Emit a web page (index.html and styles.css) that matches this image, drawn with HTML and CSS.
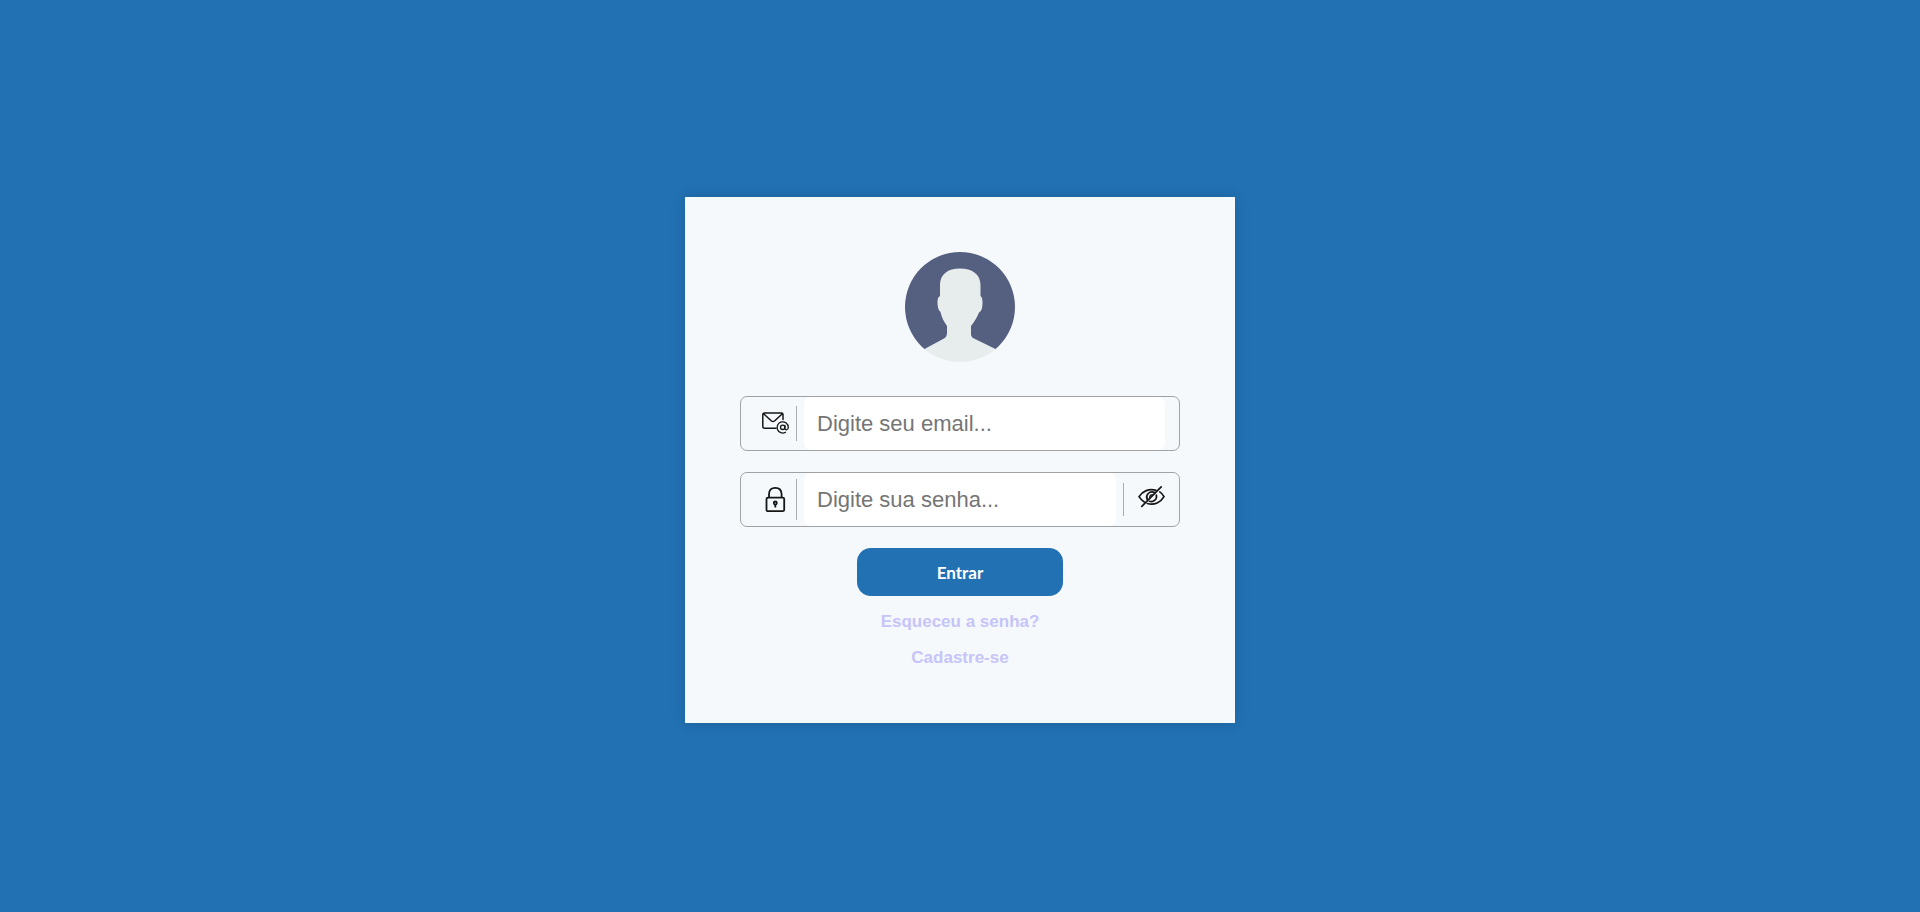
FILE: index.html
```html
<!DOCTYPE html>
<html lang="pt-BR">
<head>
<meta charset="utf-8">
<meta name="viewport" content="width=device-width, initial-scale=1">
<title>Login</title>
<link rel="stylesheet" href="styles.css">
</head>
<body class="page">
<main class="card">
  <svg class="avatar" viewBox="0 0 110 110" role="img" aria-label="Usuário">
    <defs><clipPath id="disc"><circle cx="55" cy="55" r="55"/></clipPath></defs>
    <g clip-path="url(#disc)">
      <rect width="110" height="97" fill="#556080"/>
      <path fill="#e7eced" d="M35 33C35 22 43 16.500 55 16.500S75.500 22 75.500 33V44C77 45 77.500 47 77.500 50C77.500 55 77 59 74 60.500C72 66 69 70 66 74V82Q66 85 69 86.500L90.500 97V110H19.500V97L39 86.500Q42 84.500 42 81V74C39 70 36.500 65 35.500 60C33 58 32.500 54 32.500 50C32.500 47 33 45 35 44Z"/>
    </g>
  </svg>
  <form class="form">
    <div class="field">
      <label class="lead" for="email" aria-label="Email">
        <svg class="icon" viewBox="0 1 27 27" fill="none" stroke="#161616" stroke-width="1.500" stroke-linecap="round" stroke-linejoin="round">
          <path d="M14 19.300H2.500Q.8 19.300.8 17.500V5.500Q.8 4 2.500 4H19.500Q21 4 21 5.500V10.500M1.300 4.500L9.500 12Q11 13.200 12.500 12L20.600 4.500"/>
          <path d="M23.500 23.300A5.600 5.600 0 1 1 26.300 18.300C26.300 21.500 22.900 21.600 22.900 19.300V16.300" stroke-width="1.300"/>
          <circle cx="20.700" cy="18.300" r="2.200" stroke-width="1.300"/>
        </svg>
      </label>
      <input class="input" id="email" type="email" placeholder="Digite seu email...">
    </div>
    <div class="field">
      <label class="lead lead-tall" for="password" aria-label="Senha">
        <svg class="icon" viewBox="0 0 27 27" fill="none" stroke="#161616" stroke-width="1.800" stroke-linejoin="round">
          <rect x="4.500" y="11.600" width="17.700" height="13.600" rx="1.500"/>
          <path d="M7 11.500V8.300C7 4 9.400 1.800 13.300 1.800S19.600 4 19.600 8.300V11.500"/>
          <circle cx="13.300" cy="17" r="1.500"/>
          <path d="M13.300 18.500V21.500"/>
        </svg>
      </label>
      <input class="input" id="password" type="password" placeholder="Digite sua senha...">
      <button class="reveal" type="button" aria-label="Mostrar senha">
        <svg class="icon" viewBox="0 0 27 27" fill="none" stroke="#161616" stroke-width="1.700" stroke-linecap="round">
          <path d="M18 4.300C11 2 4.500 5.300 1 10.600C2.500 13 4.300 14.800 6.300 16M9.300 17.500C16.500 19.500 22.800 16.300 26 10.600C24.800 8.500 23.500 7 21.800 5.900"/>
          <path d="M16.300 6.400C11.500 4.400 7.200 9 9.200 13.300M11.500 15.300C15.500 16.800 19.500 13 18.300 9"/>
          <path d="M14.500 8.600C12.600 8.600 11.600 10 11.700 11.400" stroke-width="1.200"/>
          <path d="M23.200.9L3.800 20.400"/>
        </svg>
      </button>
    </div>
    <button class="submit" type="submit">Entrar</button>
  </form>
  <nav class="links">
    <a class="link" href="#senha">Esqueceu a senha?</a>
    <a class="link" href="#cadastro">Cadastre-se</a>
  </nav>
</main>
</body>
</html>
```
FILE: styles.css
```css
*,
*::before,
*::after {
  box-sizing: border-box;
}

.page {
  display: flex;
  align-items: center;
  justify-content: center;
  min-height: 100vh;
  margin: 0;
  padding-top: 8px;
  background: #2271b3;
  font-family: "Liberation Sans", Arial, sans-serif;
}

.card {
  display: flex;
  flex-direction: column;
  align-items: center;
  width: 100%;
  max-width: 550px;
  padding: 55px;
  background: #f5f9fc;
  box-shadow: 0 0 14px rgba(0, 0, 0, 0.15);
}

.avatar {
  width: 110px;
  height: 110px;
  margin-bottom: 34px;
}

.form {
  display: flex;
  flex-direction: column;
  align-items: center;
  gap: 21px;
  width: 100%;
}

.field {
  display: flex;
  align-items: center;
  gap: 7px;
  width: 100%;
  height: 55px;
  padding-right: 14px;
  border: 1px solid #a0a3a5;
  border-radius: 7px;
}

.lead {
  display: flex;
  align-items: center;
  height: 35px;
  padding: 0 7px 0 21px;
  border-right: 1px solid #a9adb0;
}

.lead-tall {
  height: 41px;
}

.icon {
  display: block;
  width: 27px;
  height: 27px;
}

.input {
  flex: 1;
  min-width: 0;
  height: 100%;
  padding: 0 13px;
  border: 0;
  border-radius: 7px;
  background: #fff;
  font: 22px "Liberation Sans", Arial, sans-serif;
  outline: none;
}

.input::placeholder {
  color: #757575;
}

.reveal {
  display: flex;
  align-items: center;
  height: 33px;
  padding: 0 0 0 14px;
  border: 0;
  border-left: 1px solid #a9adb0;
  background: none;
  cursor: pointer;
}

.submit {
  width: 206px;
  height: 48px;
  border: 0;
  border-radius: 14px;
  background: #2271b3;
  color: #fff;
  font: bold 17px Lato, sans-serif;
  cursor: pointer;
}

.links {
  display: flex;
  flex-direction: column;
  align-items: center;
  gap: 16px;
  margin-top: 16px;
}

.link {
  color: #c6c4f8;
  font-size: 17px;
  font-weight: bold;
  line-height: 20px;
  text-decoration: none;
}
```
